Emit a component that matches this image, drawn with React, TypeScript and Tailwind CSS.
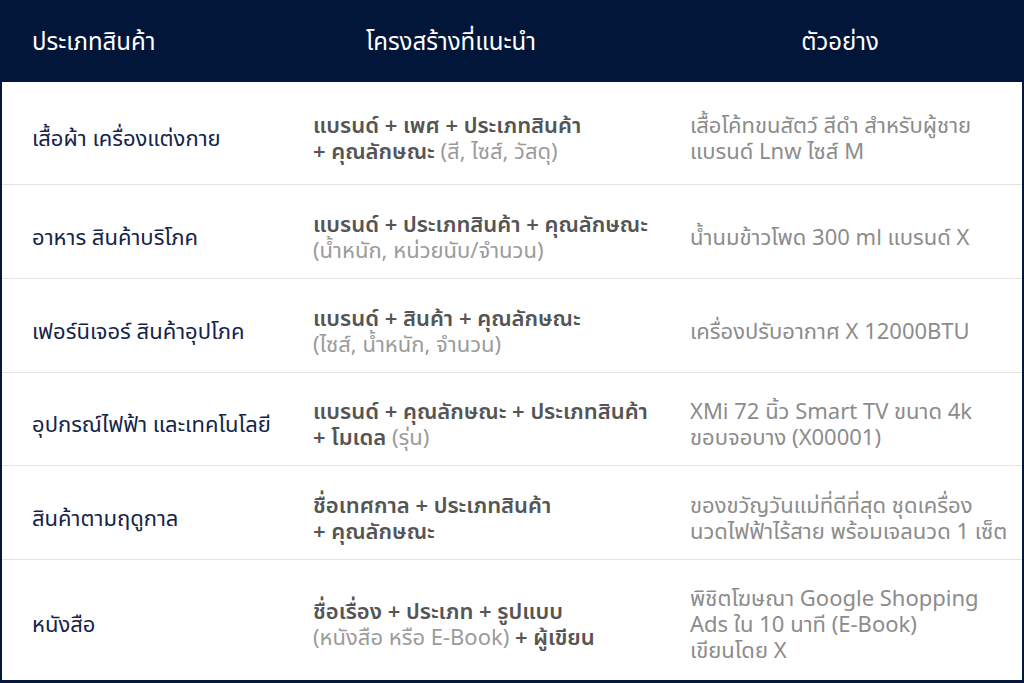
import React from 'react';

type Row = {
  category: string;
  structure: React.ReactNode;
  example: React.ReactNode;
  height: string;
};

const Muted: React.FC<{ children: React.ReactNode }> = ({ children }) => (
  <span className="font-normal text-[#9b9b9b]">{children}</span>
);

const rows: Row[] = [
  {
    category: 'เสื้อผ้า เครื่องแต่งกาย',
    structure: (
      <>
        แบรนด์ + เพศ + ประเภทสินค้า
        <br />+ คุณลักษณะ <Muted>(สี, ไซส์, วัสดุ)</Muted>
      </>
    ),
    example: (
      <>
        เสื้อโค้ทขนสัตว์ สีดำ สำหรับผู้ชาย
        <br />แบรนด์ Lnw ไซส์ M
      </>
    ),
    height: 'h-[103px]'
  },
  {
    category: 'อาหาร สินค้าบริโภค',
    structure: (
      <>
        แบรนด์ + ประเภทสินค้า + คุณลักษณะ
        <br />
        <Muted>(น้ำหนัก, หน่วยนับ/จำนวน)</Muted>
      </>
    ),
    example: <>น้ำนมข้าวโพด 300 ml แบรนด์ X</>,
    height: 'h-[94px]'
  },
  {
    category: 'เฟอร์นิเจอร์ สินค้าอุปโภค',
    structure: (
      <>
        แบรนด์ + สินค้า + คุณลักษณะ
        <br />
        <Muted>(ไซส์, น้ำหนัก, จำนวน)</Muted>
      </>
    ),
    example: <>เครื่องปรับอากาศ X 12000BTU</>,
    height: 'h-[94px]'
  },
  {
    category: 'อุปกรณ์ไฟฟ้า และเทคโนโลยี',
    structure: (
      <>
        แบรนด์ + คุณลักษณะ + ประเภทสินค้า
        <br />+ โมเดล <Muted>(รุ่น)</Muted>
      </>
    ),
    example: (
      <>
        XMi 72 นิ้ว Smart TV ขนาด 4k
        <br />ขอบจอบาง (X00001)
      </>
    ),
    height: 'h-[93px]'
  },
  {
    category: 'สินค้าตามฤดูกาล',
    structure: (
      <>
        ชื่อเทศกาล + ประเภทสินค้า
        <br />+ คุณลักษณะ
      </>
    ),
    example: (
      <>
        ของขวัญวันแม่ที่ดีที่สุด ชุดเครื่อง
        <br />นวดไฟฟ้าไร้สาย พร้อมเจลนวด 1 เซ็ต
      </>
    ),
    height: 'h-[94px]'
  },
  {
    category: 'หนังสือ',
    structure: (
      <>
        ชื่อเรื่อง + ประเภท + รูปแบบ
        <br />
        <Muted>(หนังสือ หรือ E-Book)</Muted> + ผู้เขียน
      </>
    ),
    example: (
      <>
        พิชิตโฆษณา Google Shopping
        <br />Ads ใน 10 นาที (E-Book)
        <br />เขียนโดย X
      </>
    ),
    height: 'h-[118px]'
  }
];

const App: React.FC = () => {
  return (
    <div
      className="w-[1024px] h-[683px] bg-white overflow-hidden"
      style={{ fontFamily: '"Noto Sans Thai", "Noto Sans", "DejaVu Sans", sans-serif' }}
    >
      <div className="border-x-2 border-b-[3px] border-[#03183a] h-full flex flex-col">
        <div className="grid grid-cols-[288px_376px_1fr] h-[82px] pt-[4px] bg-[#02163a] text-white text-[24px] items-center -mx-[2px] whitespace-nowrap">
          <div className="pl-[32px]">ประเภทสินค้า</div>
          <div className="text-center pr-[50px]">โครงสร้างที่แนะนำ</div>
          <div className="text-center pr-[8px]">ตัวอย่าง</div>
        </div>
        {rows.map((row, i) => (
          <div
            key={i}
            className={`grid grid-cols-[288px_376px_1fr] items-center pt-[14px] text-[22px] leading-[26px] whitespace-nowrap ${row.height} ${
              i < rows.length - 1 ? 'border-b border-[#e4e4e4]' : ''
            }`}
          >
            <div className="pl-[30px] text-[#14244a]">{row.category}</div>
            <div className="pl-[23px] font-semibold text-[#555555]">{row.structure}</div>
            <div className="pl-[24px] text-[#8c8c8c]">{row.example}</div>
          </div>
        ))}
      </div>
    </div>
  );
};

export default App;
